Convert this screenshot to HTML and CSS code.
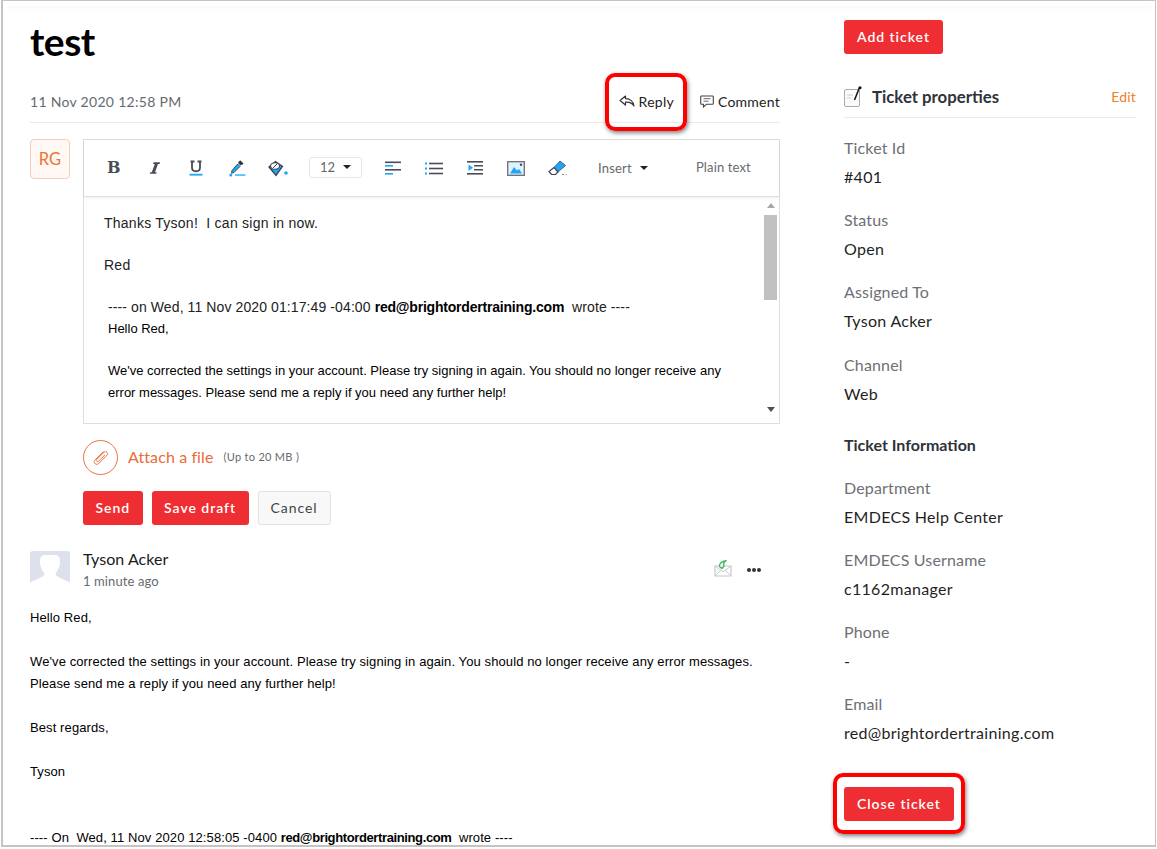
FILE: index.html
```html
<!DOCTYPE html>
<html lang="en">
<head>
<meta charset="utf-8">
<title>test</title>
<link rel="stylesheet" href="styles.css">
</head>
<body>
<div class="frame">
  <div class="top-shade"></div>
  <main class="main">
    <h1 class="title">test</h1>
    <div class="meta-row">
      <span class="date">11 Nov 2020 12:58 PM</span>
      <div class="actions">
        <span class="action">
          <svg class="action-icon" width="16" height="12" viewBox="0 0 16 12"><path d="M6.500 1 1 5.500 6.500 10V7.200C10 6.800 13 7.800 15 11 14.500 6.500 11 3.600 6.500 3.600Z" fill="none" stroke="#333" stroke-width="1.200" stroke-linejoin="round"/></svg>
          Reply
        </span>
        <span class="action">
          <svg class="action-icon" width="14" height="13" viewBox="0 0 14 13"><path d="M1.500 1h11a.8.8 0 0 1 .8.8v6.600a.8.8 0 0 1-.8.8H6.500L3.500 12V9.200H1.500a.8.8 0 0 1-.8-.8V1.800a.8.8 0 0 1 .8-.8Z" fill="none" stroke="#444" stroke-width="1.100"/><path d="M3.500 3.700h7M3.500 6.200h5" stroke="#666" stroke-width="1"/></svg>
          Comment
        </span>
      </div>
    </div>
    <div class="compose">
      <div class="avatar-rg">RG</div>
      <div class="compose-body">
        <div class="editor">
          <div class="toolbar">
            <span class="glyph-b">B</span>
            <svg class="tool tool-i" width="14" height="14" viewBox="0 0 14 14"><path d="M5.500 1.200h6.500L11.600 3H10L7 11.200h1.600l-.4 1.600H1.800l.4-1.600h1.600L6.800 3H5.100Z" fill="#4a4d57"/></svg>
            <svg class="tool tool-u" width="14" height="16" viewBox="0 0 14 16"><path d="M1.500 1.500h4M8.500 1.500h4M3 1.500v6c0 5 8 5 8 0v-6" fill="none" stroke="#4a4d57" stroke-width="1.800"/><rect x="0.500" y="13.800" width="13" height="1.800" fill="#1fa6f5"/></svg>
            <svg class="tool tool-c" width="17" height="17" viewBox="0 0 17 17"><path d="M11.500.5l3 3-1.500 1.500-.5-.5-1 1L9 3l1-1-.5-.5Z" fill="#2f3340"/><path d="M8.500 4 11 6.500 5 12.500l-2.500.7.5-2.700Z" fill="#1fa6f5" stroke="#3d4250" stroke-width=".9"/><circle cx="1.800" cy="15" r="1.500" fill="#1fa6f5"/><rect x="6" y="14.400" width="10.500" height="1.300" fill="#1fa6f5"/></svg>
            <svg class="tool tool-f" width="20" height="17" viewBox="0 0 20 17"><path d="M1 7 7.500 1.500 14.500 6.500 8 15.500Z" fill="#1fa6f5"/><path d="M1 7 7.500 1.500 14.500 6.500 8 15.500Z" fill="none" stroke="#3d4250" stroke-width="1.300"/><ellipse cx="7" cy="6" rx="4.500" ry="3.300" fill="#fff" stroke="#3d4250" stroke-width="1.100"/><path d="M5 8 9 4" stroke="#3d4250"/><circle cx="18" cy="13" r="1.800" fill="#1fa6f5"/></svg>
            <div class="size-select">12<span class="caret"></span></div>
            <svg class="tool tool-al" width="16" height="14" viewBox="0 0 16 14"><rect y="0.500" width="16" height="1.600" fill="#4a4d57"/><rect y="4" width="8" height="1.600" fill="#1fa6f5"/><rect y="8" width="16" height="1.600" fill="#4a4d57"/><rect y="12" width="8" height="1.600" fill="#1fa6f5"/></svg>
            <svg class="tool tool-ul" width="18" height="13" viewBox="0 0 18 13"><rect y="0.500" width="2" height="2" fill="#1fa6f5"/><rect y="5.500" width="2" height="2" fill="#1fa6f5"/><rect y="10.500" width="2" height="2" fill="#1fa6f5"/><rect x="4" y="0.700" width="14" height="1.600" fill="#4a4d57"/><rect x="4" y="5.700" width="14" height="1.600" fill="#4a4d57"/><rect x="4" y="10.700" width="14" height="1.600" fill="#4a4d57"/></svg>
            <svg class="tool tool-ind" width="16" height="14" viewBox="0 0 16 14"><rect y="0" width="16" height="1.600" fill="#4a4d57"/><rect y="12" width="16" height="1.600" fill="#4a4d57"/><rect x="7" y="4" width="9" height="1.500" fill="#4a4d57"/><rect x="7" y="8" width="9" height="1.500" fill="#4a4d57"/><path d="M1.500 3.500 6 6.800 1.500 10Z" fill="#1fa6f5"/></svg>
            <svg class="tool tool-img" width="18" height="15" viewBox="0 0 18 15"><rect x="0.700" y="0.700" width="16.600" height="13.600" fill="#dff1fc" stroke="#6b6e78" stroke-width="1.300"/><path d="M3 12.500 7 6l3 3.500 2-1.500 3 4.500Z" fill="#1fa6f5"/><circle cx="14" cy="3.800" r="1.200" fill="#4a4d57"/></svg>
            <svg class="tool tool-er" width="19" height="16" viewBox="0 0 19 16"><path d="M12 1 17.500 5.500 10 12 6 7.500Z" fill="#1fa6f5"/><path d="M6 7.500 1 11.500 3.500 14.500H7.500L10 12Z" fill="#fff" stroke="#3d4250" stroke-width="1.200"/><path d="M6 7.500 12 1 17.500 5.500 10 12" fill="none" stroke="#3d4250" stroke-width="0.800"/><path d="M14 14.500h2M17.500 14.500h1" stroke="#888"/></svg>
            <div class="insert">Insert<span class="caret"></span></div>
            <div class="plain">Plain text</div>
          </div>
          <div class="editor-content">
            <div class="content-text">
              <p class="reply-line">Thanks Tyson!&nbsp; I can sign in now.</p>
              <p class="reply-line gap-a">Red</p>
              <div class="quoted">
                <p class="wrote">---- on Wed, 11 Nov 2020 01:17:49 -04:00 <b>red@brightordertraining.com</b> &nbsp;wrote ----</p>
                <p class="quote-line">Hello Red,</p>
                <p class="quote-line gap-b">We've corrected the settings in your account. Please try signing in again. You should no longer receive any<br>error messages. Please send me a reply if you need any further help!</p>
              </div>
            </div>
            <div class="scrollbar">
              <span class="arrow-up"></span>
              <span class="thumb"></span>
              <span class="arrow-down"></span>
            </div>
          </div>
        </div>
        <div class="attach">
          <span class="clip">
            <svg width="20" height="20" viewBox="0 0 20 20"><path d="M12.500 3.500 4 12c-2.500 2.500 1.200 6 3.700 3.500l8.500-8.500c1.500-1.800-1.200-4.600-3-3L5.700 11.500c-1 1.200.6 2.800 1.800 1.700L14 6.800" fill="none" stroke="#ea7440" stroke-width="1"/></svg>
          </span>
          <span class="attach-label">Attach a file</span>
          <span class="attach-limit">(Up to 20 MB )</span>
        </div>
        <div class="buttons">
          <span class="btn btn-red">Send</span>
          <span class="btn btn-red">Save draft</span>
          <span class="btn btn-plain">Cancel</span>
        </div>
      </div>
    </div>
    <article class="message">
      <div class="msg-head">
        <div class="msg-avatar">
          <svg width="40" height="37" viewBox="0 0 40 37"><rect width="40" height="37" fill="#dde1ec"/><path d="M15 4h10c3.500 0 5 2.500 5 7 0 5-2.500 9-4.500 11.500 0 3 4 4 14.500 9V37H0v-5.500C10.500 26.500 14.500 25.500 14.500 22.500 12.500 20 10 16 10 11c0-4.500 1.500-7 5-7Z" fill="#fff"/></svg>
        </div>
        <div class="msg-who">
          <div class="msg-name">Tyson Acker</div>
          <div class="msg-time">1 minute ago</div>
        </div>
        <svg class="msg-mail" width="18" height="18" viewBox="0 0 18 18"><path d="M1 7h16v10H1Z" fill="#fff" stroke="#c8c8c8" stroke-width="1.200"/><path d="M1 7l8 6 8-6M1 17l6-6M17 17l-6-6" fill="none" stroke="#c8c8c8"/><path d="M12.500 1.500C8 2.500 4.500 4.500 5.500 7.500L8 9.500 10 7C9 5 10 3 12.500 1.500Z" fill="#eaf8ef" stroke="#45b866" stroke-width="1.400"/></svg>
        <div class="dots"><i></i><i></i><i></i></div>
      </div>
      <div class="msg-body">
        <p>Hello Red,</p>
        <p>We've corrected the settings in your account. Please try signing in again. You should no longer receive any error messages.<br>Please send me a reply if you need any further help!</p>
        <p>Best regards,</p>
        <p>Tyson</p>
        <p class="msg-quote">---- On&nbsp; Wed, 11 Nov 2020 12:58:05 -0400 <b>red@brightordertraining.com</b> &nbsp;wrote ----</p>
      </div>
    </article>
  </main>
  <aside class="side">
    <span class="btn btn-red">Add ticket</span>
    <div class="props-head">
      <svg class="props-icon" width="19" height="21" viewBox="0 0 19 21"><rect x="0.500" y="3.500" width="15" height="17" rx="1.500" fill="#fafafa" stroke="#aaa"/><path d="M3 9h6M3 12h4" stroke="#ccc"/><path d="M15.500 1.500 10.500 14" stroke="#111" stroke-width="1.500"/><circle cx="16" cy="1.700" r="1.500" fill="#111"/></svg>
      <span class="props-title">Ticket properties</span>
      <span class="edit">Edit</span>
    </div>
    <dl class="fields">
      <div class="field"><dt>Ticket Id</dt><dd>#401</dd></div>
      <div class="field"><dt>Status</dt><dd>Open</dd></div>
      <div class="field"><dt>Assigned To</dt><dd>Tyson Acker</dd></div>
      <div class="field field-channel"><dt>Channel</dt><dd>Web</dd></div>
    </dl>
    <h2 class="info-title">Ticket Information</h2>
    <dl class="fields">
      <div class="field"><dt>Department</dt><dd>EMDECS Help Center</dd></div>
      <div class="field"><dt>EMDECS Username</dt><dd>c1162manager</dd></div>
      <div class="field"><dt>Phone</dt><dd>-</dd></div>
      <div class="field"><dt>Email</dt><dd>red@brightordertraining.com</dd></div>
    </dl>
    <span class="btn btn-red btn-close">Close ticket</span>
  </aside>
  <div class="callout callout-reply"></div>
  <div class="callout callout-close"></div>
</div>
</body>
</html>
```
FILE: styles.css
```css
* { box-sizing: border-box; }
html, body { margin: 0; padding: 0; background: #fff; }
body { width: 1157px; height: 849px; overflow: hidden; font-family: Lato, sans-serif; }
p, h1, h2, dl, dd, dt { margin: 0; padding: 0; font-weight: normal; }

.frame {
  position: relative;
  display: flex;
  width: 1155px;
  height: 847px;
  margin-left: 1px;
  overflow: hidden;
  border: solid #c4c4c4;
  border-width: 1px 1px 2px 2px;
  background: #fff;
}
.top-shade { position: absolute; left: 4px; right: 4px; top: 5px; height: 6px; background: linear-gradient(#fafafa, #fff); }

/* main column */
.main { position: relative; width: 750px; margin-left: 27px; flex: none; }
.title { font-size: 39px; line-height: 48px; font-weight: 700; color: #000; margin-top: 16px; letter-spacing: -0.5px; }
.meta-row { display: flex; justify-content: space-between; align-items: center; height: 58px; padding-top: 15px; border-bottom: 1px solid #eaeaea; }
.date { font-size: 14px; color: #666a70; letter-spacing: 0.3px; }
.actions { display: flex; gap: 26px; }
.action { display: flex; align-items: center; gap: 4px; font-size: 14px; color: #222; letter-spacing: 0.25px; }

.compose { display: flex; margin-top: 16px; }
.avatar-rg { width: 40px; height: 40px; flex: none; border: 1px solid #f2cfba; border-radius: 4px; background: #fff8f4; color: #ee7433; font-size: 16.5px; line-height: 38px; text-align: center; }
.compose-body { margin-left: 13px; width: 697px; }
.editor { border: 1px solid #dedede; height: 285px; }
.toolbar { display: flex; align-items: center; position: relative; height: 57px; border-bottom: 1px solid #dfdfdf; box-shadow: 0 1px 3px rgba(0,0,0,.08); padding-left: 23px; font-size: 12px; color: #666; }
.tool { flex: none; }
.glyph-b { width: 14px; font-family: "DejaVu Serif", serif; font-weight: 700; font-size: 16px; line-height: 18px; color: #4a4d57; }
.tool-i { margin-left: 27px; }
.tool-u { margin-left: 27px; }
.tool-c { margin-left: 26px; }
.tool-f { margin-left: 22px; }
.size-select { display: flex; align-items: center; justify-content: flex-start; margin-left: 21px; margin-top: -2px; padding-left: 10px; width: 53px; height: 21px; border: 1px solid #e8e8e8; border-radius: 3px; font-size: 13px; color: #666; }
.size-select .caret { margin-left: 8px; }
.caret { display: inline-block; width: 0; height: 0; border: 4px solid transparent; border-top: 4px solid #222; border-bottom: 0; }
.tool-al { margin-left: 23px; }
.tool-ul { margin-left: 24px; }
.tool-ind { margin-left: 24px; }
.tool-img { margin-left: 24px; }
.tool-er { margin-left: 23px; }
.insert { display: flex; align-items: center; margin-left: 31px; font-size: 13px; color: #666a70; letter-spacing: 0.2px; }
.insert .caret { margin-left: 8px; }
.plain { margin-left: 48px; font-size: 13px; margin-top: -2px; color: #666a70; letter-spacing: 0.15px; }

.editor-content { display: flex; justify-content: space-between; height: 226px; overflow: hidden; }
.content-text { padding: 17px 0 0 20px; font-family: "Liberation Sans", Arial, sans-serif; color: #222; width: 678px; }
.reply-line { font-size: 14px; line-height: 18px; letter-spacing: 0.25px; }
.gap-a { margin-top: 24px; }
.quoted { margin: 24px 0 0 4px; color: #000; }
.wrote { font-size: 14px; line-height: 18px; color: #222; letter-spacing: 0.1px; white-space: nowrap; }
.wrote b { color: #000; font-weight: 700; letter-spacing: -0.2px; }
.quote-line { font-size: 13px; line-height: 22px; margin-top: 2px; white-space: nowrap; }
.gap-b { margin-top: 20px; }

.scrollbar { width: 15px; display: flex; flex-direction: column; align-items: center; padding-top: 6px; margin-right: 1px; }
.arrow-up { width: 0; height: 0; border: 4px solid transparent; border-bottom: 5px solid #a8a8a8; border-top: 0; }
.thumb { width: 13px; height: 85px; background: #c1c1c1; margin-top: 7px; }
.arrow-down { width: 0; height: 0; border: 4px solid transparent; border-top: 5px solid #505050; border-bottom: 0; margin-top: auto; margin-bottom: 11px; }

.attach { display: flex; align-items: center; margin-top: 16px; height: 35px; }
.clip { width: 35px; height: 35px; border: 1px solid #ea7440; border-radius: 50%; display: flex; align-items: center; justify-content: center; flex: none; }
.attach-label { margin-left: 10px; font-size: 16px; line-height: 20px; margin-top: -2px; color: #ea6a3a; letter-spacing: 0.1px; }
.attach-limit { margin-left: 10px; font-size: 11px; line-height: 14px; margin-top: -2px; color: #666a70; letter-spacing: 0.3px; }

.buttons { display: flex; gap: 9px; margin-top: 16px; }
.btn { display: inline-flex; align-items: center; justify-content: center; height: 34px; padding-bottom: 2px; border-radius: 3px; font-size: 14px; letter-spacing: 0.95px; font-weight: 600; }
.btn-red { background: #ee2e32; color: #fff; padding-left: 13px; padding-right: 13px; }
.buttons .btn-red { padding-left: 12.5px; padding-right: 12.5px; }
.btn-plain { background: #f8f8f8; border: 1px solid #e2e2e2; color: #444; padding-left: 12px; padding-right: 12px; font-weight: 400; }

/* message */
.message { margin-top: 26px; }
.msg-head { display: flex; align-items: flex-start; height: 44px; }
.msg-avatar { width: 40px; height: 37px; flex: none; border-radius: 3px 3px 0 0; overflow: hidden; }
.msg-who { margin-left: 13px; margin-top: -2px; }
.msg-name { font-size: 16px; line-height: 19px; color: #1a1a1a; letter-spacing: 0.05px; }
.msg-time { font-size: 13px; line-height: 16px; margin-top: 5px; color: #666a70; letter-spacing: 0.1px; }
.msg-mail { margin-left: auto; margin-top: 8px; flex: none; }
.dots { display: flex; gap: 1px; margin: 17px 19px 0 15px; }
.dots i { display: block; width: 4px; height: 4px; border-radius: 50%; background: #333; }
.msg-body { margin-top: 12px; font-family: "Liberation Sans", Arial, sans-serif; font-size: 13px; line-height: 22px; letter-spacing: 0.1px; color: #000; }
.msg-body p { margin-bottom: 22px; white-space: nowrap; }
.msg-body .msg-quote { margin-top: 44px; margin-bottom: 0; }
.msg-quote b { letter-spacing: -0.38px; }

/* side column */
.side { width: 292px; margin-left: 64px; flex: none; padding-top: 19px; }
.props-head { display: flex; align-items: center; height: 49px; margin-top: 15px; border-bottom: 1px solid #eaeaea; padding-top: 6px; }
.props-icon { flex: none; }
.props-title { margin-left: 9px; font-size: 16.8px; font-weight: 700; color: #2f333a; }
.edit { margin-left: auto; font-size: 14px; color: #ee7f22; letter-spacing: 0.2px; margin-top: 1px; }
.fields { display: block; }
.field { margin-top: 20px; }
.field + .field { margin-top: 23px; }
.field + .field-channel { margin-top: 24px; }
dt { font-size: 16px; line-height: 20px; color: #6d7075; letter-spacing: 0.15px; }
dd { font-size: 16px; line-height: 20px; margin-top: 9px; color: #1f1f1f; letter-spacing: 0.3px; }
.info-title { font-size: 16px; line-height: 20px; font-weight: 700; color: #2f333a; margin-top: 31px; }
.info-title + .fields .field:first-child { margin-top: 23px; }
.btn-close { margin-top: 44px; }

/* annotation callouts */
.callout { position: absolute; border: 4px solid #f00; border-radius: 10px; box-shadow: 1px 2px 4px rgba(0,0,0,.5); pointer-events: none; }
.callout-reply { left: 602px; top: 72px; width: 82px; height: 58px; }
.callout-close { left: 830px; top: 772px; width: 132px; height: 61px; }
```
